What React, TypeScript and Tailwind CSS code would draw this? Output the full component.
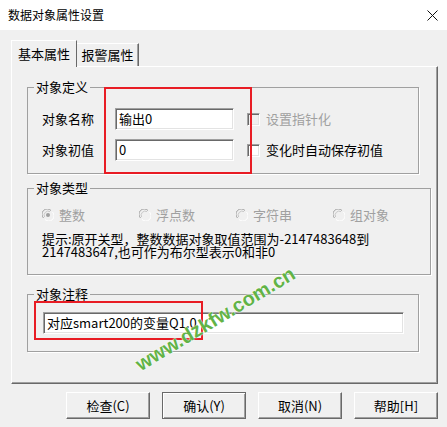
import React from 'react';

const font = "font-['Noto_Sans_CJK_SC',sans-serif]";

function Sunken({ className = '', children }: { className?: string; children?: React.ReactNode }) {
  return (
    <div
      className={`border-t border-l border-t-[#a0a0a0] border-l-[#a0a0a0] border-b border-r border-b-white border-r-white shadow-[inset_1px_1px_0_#696969,inset_-1px_-1px_0_#e3e3e3] ${className}`}
    >
      {children}
    </div>
  );
}

function Check({ label, disabled }: { label: string; disabled?: boolean }) {
  return (
    <div className="flex items-center">
      <Sunken className={`w-[13px] h-[13px] ${disabled ? 'bg-[#f0f0f0]' : 'bg-white'}`} />
      <span className={`ml-[6px] text-[13px] leading-[16px] ${disabled ? 'text-[#a0a0a0]' : 'text-black'}`}>
        {label}
      </span>
    </div>
  );
}

function Radio({ label, checked }: { label: string; checked?: boolean }) {
  return (
    <div className="w-[97px] flex items-center">
      <svg width="12" height="12" viewBox="0 0 12 12">
        <circle cx="6" cy="6" r="5.5" fill="#f0f0f0" />
        <path d="M1.5 9 A5 5 0 0 1 9 1.5" fill="none" stroke="#a0a0a0" strokeWidth="1" />
        <path d="M2.6 8 A4 4 0 0 1 8 2.6" fill="none" stroke="#c8c8c8" strokeWidth="1" />
        <path d="M3 10.5 A5 5 0 0 0 10.5 3" fill="none" stroke="#ffffff" strokeWidth="1" />
        {checked && <circle cx="6" cy="6" r="2" fill="#a0a0a0" />}
      </svg>
      <span className="ml-[5px] text-[13px] leading-[16px] text-[#a0a0a0]">{label}</span>
    </div>
  );
}

function Group({ title, className = '', children }: { title: string; className?: string; children: React.ReactNode }) {
  return (
    <fieldset className={`ml-[15px] w-[392px] border border-[#a0a0a0] shadow-[1px_1px_0_white] ${className}`}>
      <legend className="ml-[6px] px-[2px] text-[13px] leading-[16px] text-black">{title}</legend>
      {children}
    </fieldset>
  );
}

function Btn({ label, primary }: { label: string; primary?: boolean }) {
  return (
    <button
      className={`w-[84px] h-[27px] bg-[#f0f0f0] text-[13px] text-black flex items-center justify-center ${
        primary
          ? 'border border-[#696969] shadow-[inset_1px_1px_0_white,inset_-1px_-1px_0_#a0a0a0]'
          : 'border border-t-white border-l-white border-r-[#696969] border-b-[#696969] shadow-[inset_-1px_-1px_0_#a0a0a0]'
      }`}
    >
      {label}
    </button>
  );
}

export default function App() {
  return (
    <div className={`relative w-[447px] h-[427px] bg-[#f0f0f0] overflow-hidden ${font}`}>
      {/* title bar */}
      <div className="h-[30px] bg-white flex items-center justify-between pl-[8px] pr-[9px]">
        <span className="text-[12px] text-black">数据对象属性设置</span>
        <svg width="11" height="11" viewBox="0 0 11 11">
          <path d="M0.5 0.5 L10.5 10.5 M10.5 0.5 L0.5 10.5" stroke="#111" strokeWidth="1" />
        </svg>
      </div>

      {/* tabs */}
      <div className="mt-[10px] ml-[11px] flex items-end h-[26px]">
        <div className="relative z-10 -mb-px w-[66px] h-[27px] bg-[#f0f0f0] border-l border-t border-white border-r border-r-[#696969] flex items-center justify-center text-[13px] text-black pb-px">
          基本属性
        </div>
        <div className="w-[62px] h-[23px] border-t border-t-white border-r border-r-[#696969] shadow-[inset_-1px_0_0_#a0a0a0] flex items-center justify-center text-[13px] text-black">
          报警属性
        </div>
      </div>

      {/* panel */}
      <div className="ml-[11px] w-[427px] h-[318px] border border-t-white border-l-white border-r-[#696969] border-b-[#696969] shadow-[inset_-1px_-1px_0_#a0a0a0]">
        <Group title="对象定义" className="mt-[12px] h-[95px]">
          <div className="pt-[13px] pl-[14px] flex flex-col gap-[9px]">
            <div className="flex items-center h-[22px]">
              <span className="w-[73px] text-[13px] text-black">对象名称</span>
              <Sunken className="w-[119px] h-[22px] bg-white flex items-center pl-[3px] text-[13px] text-black">
                输出0
              </Sunken>
              <div className="ml-[13px]">
                <Check label="设置指针化" disabled />
              </div>
            </div>
            <div className="flex items-center h-[22px]">
              <span className="w-[73px] text-[13px] text-black">对象初值</span>
              <Sunken className="w-[119px] h-[22px] bg-white flex items-center pl-[3px] text-[13px] text-black">
                0
              </Sunken>
              <div className="ml-[13px]">
                <Check label="变化时自动保存初值" />
              </div>
            </div>
          </div>
        </Group>

        <Group title="对象类型" className="mt-[6px] h-[95px]">
          <div className="pt-[11px] pl-[14px]">
            <div className="flex h-[16px] items-center">
              <Radio label="整数" checked />
              <Radio label="浮点数" />
              <Radio label="字符串" />
              <Radio label="组对象" />
            </div>
            <p className="mt-[9px] text-[13px] leading-[13px] text-black">
              提示:原开关型，整数数据对象取值范围为-2147483648到
              <br />
              2147483647,也可作为布尔型表示0和非0
            </p>
          </div>
        </Group>

        <Group title="对象注释" className="mt-[11px] h-[66px]">
          <div className="pt-[10px] pl-[15px]">
            <Sunken className="w-[361px] h-[22px] bg-white flex items-center pl-[3px] text-[13px] text-black">
              对应smart200的变量Q1.0
            </Sunken>
          </div>
        </Group>
      </div>

      {/* buttons */}
      <div className="mt-[8px] pl-[66px] flex gap-[12px]">
        <Btn label="检查(C)" />
        <Btn label="确认(Y)" primary />
        <Btn label="取消(N)" />
        <Btn label="帮助[H]" />
      </div>

      {/* annotation overlays */}
      <div className="absolute left-[104px] top-[87px] w-[148px] h-[87px] border-2 border-[#e81c24] pointer-events-none" />
      <div className="absolute left-[34px] top-[301px] w-[169px] h-[39px] border-2 border-[#e81c24] pointer-events-none" />

      {/* watermark */}
      <div className="absolute left-[124px] top-[306px] w-[184px] h-[24px] -rotate-[31deg] font-['Liberation_Sans',sans-serif] font-bold text-[20px] leading-[24px] text-[#62b347] [text-shadow:0_0_2px_white,0_0_1px_white] pointer-events-none whitespace-nowrap">
        www.dzkfw.com.cn
      </div>
    </div>
  );
}
